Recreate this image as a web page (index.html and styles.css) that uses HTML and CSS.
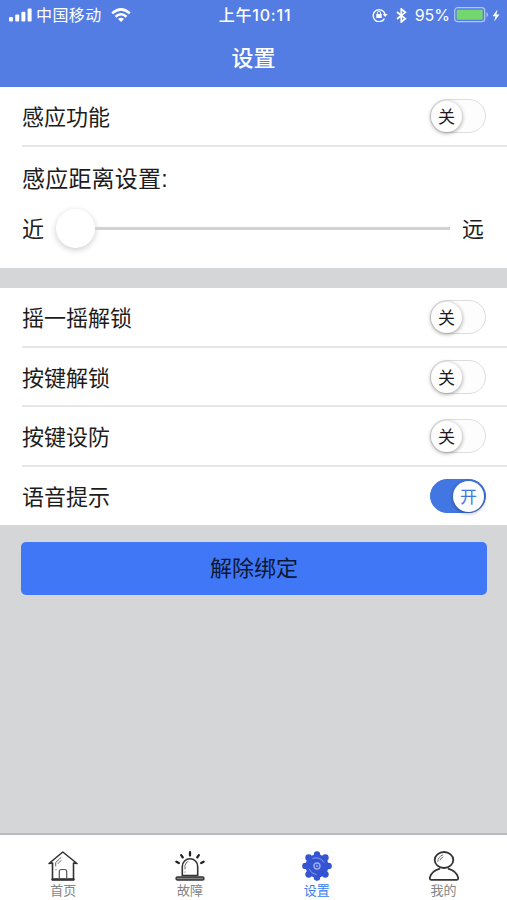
FILE: index.html
```html
<!DOCTYPE html>
<html lang="zh-CN">
<head>
<meta charset="utf-8">
<title>设置</title>
<link rel="stylesheet" href="styles.css">
</head>
<body>
<div class="screen">
  <header class="header">
    <div class="status">
      <div class="status-left">
        <svg class="signal" width="23" height="14" viewBox="0 0 23 14" fill="#fff"><rect x="0" y="9" width="4" height="4.5" rx="1"/><rect x="6.2" y="6.5" width="4" height="7" rx="1"/><rect x="12.4" y="3.8" width="4" height="9.7" rx="1"/><rect x="18.6" y="0.5" width="4" height="13" rx="1"/></svg>
        <span class="carrier">中国移动</span>
        <svg class="wifi" width="20" height="14" viewBox="0 0 20 14" fill="none" stroke="#fff" stroke-width="2.5"><path d="M1.2 5.3Q10 -2.5 18.8 5.3"/><path d="M4.5 8.7Q10 3.8 15.5 8.7"/><path d="M7 11Q10 8.3 13 11L10 14Z" fill="#fff" stroke="none"/></svg>
      </div>
      <span class="time">上午10:11</span>
      <div class="status-right">
        <svg width="16" height="14" viewBox="0 0 16 14" fill="none" stroke="#fff" stroke-width="1.4"><path d="M12.4 10.6A6 6 0 1 1 13 6.2"/><path d="M10.8 6H15.6L13.2 9Z" fill="#fff" stroke="none"/><rect x="4.3" y="6" width="5.4" height="4" fill="#fff" stroke="none"/><path d="M5.4 6V4.8a1.6 1.6 0 0 1 3.2 0V6" stroke-width="1"/></svg>
        <svg class="bluetooth" width="11" height="15" viewBox="0 0 11 15" fill="none" stroke="#fff" stroke-width="1.7"><path d="M1 4L9.3 10.7L5.3 14V1L9.3 4.3L1 11"/></svg>
        <span class="percent">95%</span>
        <svg class="battery" width="36" height="16" viewBox="0 0 36 16"><rect x=".7" y=".7" width="30" height="14" rx="3" fill="none" stroke="#b4c6f3" stroke-width="1.2"/><rect x="2.7" y="2.7" width="26" height="10" rx="1" fill="#73d66e"/><path d="M32.5 5q3 2.7 0 5.4z" fill="#b4c6f3"/></svg>
        <svg class="bolt" width="8" height="13" viewBox="0 0 8 13"><path d="M5.5 .5L.5 7.2H3.5L2.2 12.5L7.5 5.4H4.4Z" fill="#fff"/></svg>
      </div>
    </div>
    <h1 class="title">设置</h1>
  </header>

  <section class="group">
    <div class="row"><span class="label">感应功能</span><div class="switch"><span class="knob">关</span></div></div>
    <div class="distance">
      <div class="distance-title">感应距离设置:</div>
      <div class="slider-row">
        <span class="label">近</span>
        <div class="slider"><div class="thumb"></div><div class="track"></div></div>
        <span class="label">远</span>
      </div>
    </div>
  </section>

  <section class="group options">
    <div class="row"><span class="label">摇一摇解锁</span><div class="switch"><span class="knob">关</span></div></div>
    <div class="row"><span class="label">按键解锁</span><div class="switch"><span class="knob">关</span></div></div>
    <div class="row"><span class="label">按键设防</span><div class="switch"><span class="knob">关</span></div></div>
    <div class="row"><span class="label">语音提示</span><div class="switch on"><span class="knob">开</span></div></div>
  </section>

  <button class="unbind">解除绑定</button>

  <nav class="tabs">
    <div class="tab">
      <svg width="30" height="30" viewBox="0 0 30 30" fill="none" stroke="#333" stroke-linecap="round" stroke-linejoin="round"><path d="M1 12.5L14.8 1L29 12.5L25.5 12V28.5H4.5V12Z" stroke-width="1.6"/><path d="M4.5 28.5H25.5" stroke-width="2.4"/><path d="M11.3 28V20.5q0-2 2-2h3.4q2 0 2 2V28" stroke-width="1.2" stroke="#555"/><path d="M7.7 15V11.5L13 6.5M8 18.5v.4M10.2 12.5L13 9.5" stroke-width="1" stroke="#666"/></svg>
      <span>首页</span>
    </div>
    <div class="tab">
      <svg width="30" height="30" viewBox="0 0 30 30" fill="none" stroke="#333" stroke-linecap="round"><path d="M7.3 24.5V15.5a7.7 7.7 0 0 1 15.4 0V24.5Z" stroke-width="1.6"/><rect x="1" y="26" width="28" height="3" rx="1.5" fill="#888" stroke-width="1.4"/><path d="M10 18V14.5q.5-3 3-4M10 21v.2" stroke-width="1" stroke="#666"/><path d="M15 1.2V4.5M6.2 4.2L7.7 6.4M23.8 4.2L22.3 6.4M1.4 10.7L3.8 12M28.6 10.7L26.2 12" stroke="#222" stroke-width="2.3"/></svg>
      <span>故障</span>
    </div>
    <div class="tab active">
      <svg width="30" height="30" viewBox="0 0 30 30"><g fill="#3454d2"><circle cx="15" cy="15" r="11.5"/><circle cx="15" cy="3.4" r="3.2"/><circle cx="23.3" cy="6.7" r="3.4"/><circle cx="26.6" cy="15" r="3.2"/><circle cx="23.3" cy="23.3" r="3.4"/><circle cx="15" cy="26.6" r="3.2"/><circle cx="6.7" cy="23.3" r="3.4"/><circle cx="3.4" cy="15" r="3.2"/><circle cx="6.7" cy="6.7" r="3.4"/></g><g fill="none" stroke="#9cadf0"><circle cx="15" cy="15" r="3" stroke-width="1.4"/><path d="M10.5 7.5q7-2.6 11.7 4.2M7 18q2.3 4.8 7.5 5.7" stroke-width=".8"/></g><circle cx="15" cy="15" r="1" fill="#9cadf0"/></svg>
      <span>设置</span>
    </div>
    <div class="tab">
      <svg width="30" height="30" viewBox="0 0 30 30" fill="none" stroke="#333" stroke-width="1.8" stroke-linecap="round" stroke-linejoin="round"><ellipse cx="15" cy="9" rx="9.3" ry="8"/><path d="M10.3 17.8Q2.5 20 .9 26.4Q.5 28.8 2.6 28.8H27.4Q29.5 28.8 29.1 26.4Q27.5 20 19.7 17.8"/><path d="M8.8 10.5q0-5 5-6.5M11 9q1-2.5 3-3" stroke-width="1" stroke="#777"/></svg>
      <span>我的</span>
    </div>
  </nav>
</div>
</body>
</html>
```

FILE: styles.css
```css
* { box-sizing: border-box; }
body {
  margin: 0;
  background: #d5d6d8;
  color: #1c1c1c;
  font-family: "Liberation Sans", "Noto Sans CJK SC", sans-serif;
}
svg { display: block; flex: none; }
.screen { width: 507px; height: 900px; display: flex; flex-direction: column; }
.header { height: 87px; background: #547de4; color: #fff; }
.status {
  height: 30px;
  padding: 0 7px 0 9px;
  display: grid;
  grid-template-columns: 1fr auto 1fr;
  align-items: center;
  font-family: Inter, "Noto Sans CJK SC", sans-serif;
  font-size: 16px;
  line-height: 30px;
}
.status-left, .status-right { display: flex; align-items: center; }
.status-right { justify-content: flex-end; }
.carrier { margin-left: 4px; letter-spacing: .4px; }
.wifi { margin-left: 9px; }
.time { padding-left: 1px; font-weight: 500; letter-spacing: .8px; }
.bluetooth { margin-left: 8px; }
.percent { margin-left: 8px; }
.battery { margin-left: 4px; }
.bolt { margin-left: 2px; }
.title { margin: 0; font-size: 22px; font-weight: 500; line-height: 58px; text-align: center; }
.group { background: #fff; padding-left: 22px; height: 181px; font-size: 22px; }
.options { margin-top: 20px; height: 237px; }
.row {
  height: 59.4px;
  padding: 0 21px 0 0;
  display: flex;
  align-items: center;
  justify-content: space-between;
  border-bottom: 2px solid #e6e6e6;
}
.group:first-of-type .row { height: 60px; }
.label { padding-bottom: 2px; }
.switch {
  width: 56px;
  height: 34px;
  padding: 1px 1px 1px 0;
  display: flex;
  border: 1px solid #dedede;
  border-radius: 17px;
  background: #fdfdfd;
}
.knob {
  width: 31px;
  height: 31px;
  border-radius: 50%;
  background: #fff;
  box-shadow: 0 1px 4px rgba(0, 0, 0, .4);
  font-size: 17px;
  line-height: 33px;
  text-align: center;
}
.options .row:last-child { height: 58px; border-bottom: 0; }
.options .row:first-child { height: 60px; }
.on { justify-content: flex-end; background: #4277e3; border-color: #4277e3; }
.on .knob { color: #4277e3; }
.distance-title { height: 62px; line-height: 65px; font-size: 23px; letter-spacing: .2px; }
.slider-row { height: 38px; padding-right: 23px; display: flex; align-items: center; }
.slider { flex: 1; display: flex; align-items: center; margin: 0 12px; }
.thumb {
  width: 39px;
  height: 39px;
  border-radius: 50%;
  background: #fff;
  box-shadow: 0 2px 6px rgba(0, 0, 0, .2);
}
.track { flex: 1; height: 3px; background: #d0d1d2; }
.unbind {
  margin: 17px 20px 0 21px;
  height: 53px;
  padding: 0;
  border: 0;
  border-radius: 5px;
  background: #3f77f6;
  color: #0b1733;
  font: 22px/53px "Liberation Sans", "Noto Sans CJK SC", sans-serif;
}
.tabs {
  height: 67px;
  margin-top: auto;
  padding-top: 16px;
  display: grid;
  grid-template-columns: repeat(4, 1fr);
  border-top: 2px solid #b9babc;
  background: #fff;
}
.tab {
  display: flex;
  flex-direction: column;
  align-items: center;
  color: #858585;
  font-size: 13px;
  line-height: 19px;
}
.active { color: #397cf4; }
```
